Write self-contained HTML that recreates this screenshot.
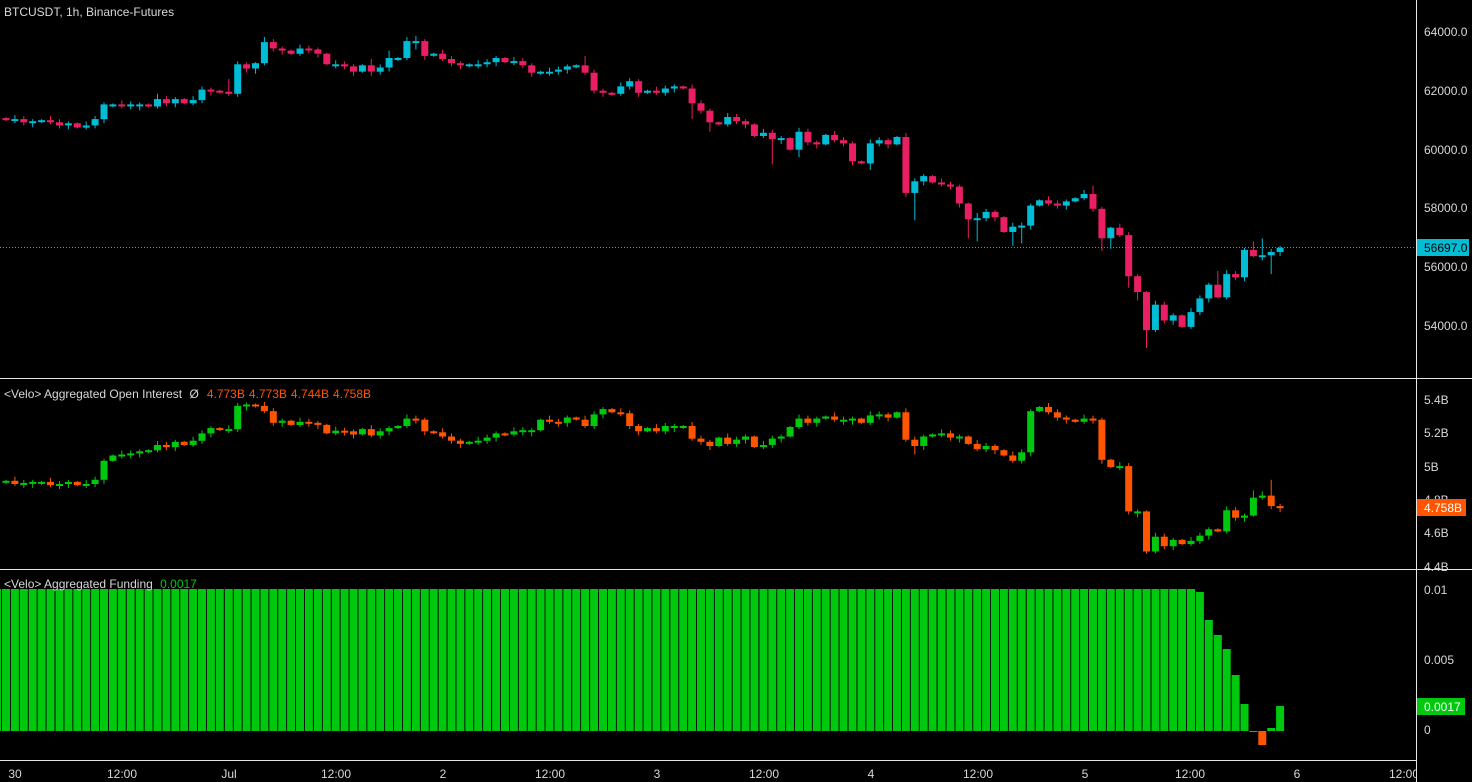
<!DOCTYPE html>
<html><head><meta charset="utf-8"><style>
html,body{margin:0;padding:0;background:#000;width:1472px;height:782px;overflow:hidden}
svg{display:block}
text{font-family:"Liberation Sans",sans-serif;font-size:12px;fill:#d8d8d8}
</style></head><body>
<svg id="s" width="1472" height="782" xmlns="http://www.w3.org/2000/svg">
<rect width="1472" height="782" fill="#000"/>
<g id="g"></g>
<line x1="0" y1="247.5" x2="1416" y2="247.5" stroke="#00bcd4" stroke-width="1" stroke-dasharray="1,2"/>
<line x1="0" y1="378.5" x2="1472" y2="378.5" stroke="#e6e6e6"/>
<line x1="0" y1="569.5" x2="1472" y2="569.5" stroke="#e6e6e6"/>
<line x1="0" y1="760.5" x2="1416" y2="760.5" stroke="#e6e6e6"/>
<line x1="1416.5" y1="0" x2="1416.5" y2="782" stroke="#e6e6e6"/>
<text x="4" y="16">BTCUSDT, 1h, Binance-Futures</text>
<text x="4" y="398">&lt;Velo&gt; Aggregated Open Interest  <tspan dx="4">Ø</tspan><tspan dx="8" style="fill:#ff5500">4.773B</tspan><tspan dx="4" style="fill:#ff5500">4.773B</tspan><tspan dx="4" style="fill:#ff5500">4.744B</tspan><tspan dx="4" style="fill:#ff5500">4.758B</tspan></text>
<text x="4" y="588">&lt;Velo&gt; Aggregated Funding <tspan dx="4" style="fill:#00c80f">0.0017</tspan></text>
<g>
<text x="1424" y="36">64000.0</text>
<text x="1424" y="95">62000.0</text>
<text x="1424" y="154">60000.0</text>
<text x="1424" y="212">58000.0</text>
<text x="1424" y="271">56000.0</text>
<text x="1424" y="330">54000.0</text>
<rect x="1417" y="239" width="52" height="17" fill="#00bcd4"/>
<text x="1424" y="252" style="fill:#000">56697.0</text>
<text x="1424" y="404">5.4B</text>
<text x="1424" y="437">5.2B</text>
<text x="1424" y="471">5B</text>
<text x="1424" y="504">4.8B</text>
<text x="1424" y="537">4.6B</text>
<text x="1424" y="571">4.4B</text>
<rect x="1417" y="499" width="49" height="17" fill="#ff5500"/>
<text x="1424" y="512" style="fill:#fff">4.758B</text>
<text x="1424" y="594">0.01</text>
<text x="1424" y="664">0.005</text>
<rect x="1417" y="698" width="48" height="17" fill="#00c80f"/>
<text x="1424" y="711" style="fill:#fff">0.0017</text>
<text x="1424" y="734">0</text>
</g>
<g id="t"></g>
</svg>
<script>
var g=document.getElementById('g'),out='';
function T(y){return 20+(y-20)*1.0545;}
function cx(i){return 6+8.91*i;}
var P=[115,114,117,116,115,117,120,118,122,120,114,100,100,101,100,100,102,95,99,95,99,96,86,87,88,90,62,66,61,41,47,49,52,47,48,52,62,62,64,69,63,69,65,56,56,40,40,54,52,57,61,63,62,62,60,56,60,59,63,70,69,69,67,64,63,70,87,89,90,83,78,89,87,89,85,83,85,99,106,117,119,112,116,119,130,127,133,132,143,126,136,138,129,134,137,154,156,137,134,138,131,184,173,168,174,176,178,194,209,208,202,207,221,216,215,196,191,194,196,192,189,185,199,227,217,224,263,278,314,290,305,300,311,297,284,271,283,261,264,238,244,243,240,236];
var PW={17:[90,null],25:[76,null],29:[36,null],28:[null,71],46:[35,48],43:[49,null],41:[57,73],65:[54,null],77:[null,114],79:[null,126],86:[null,157],89:[null,150],97:[null,162],101:[null,188],102:[null,210],108:[null,227],109:[203,230],113:[null,234],114:[null,232],122:[177,null],123:[null,239],124:[null,237],126:[null,274],127:[null,286],128:[null,331],136:[258,null],140:[230,null],141:[227,248],142:[null,261]};
var O=[457,460,459,458,458,461,460,458,461,460,456,438,433,432,431,429,428,423,425,420,423,419,412,407,408,408,386,384.6,386,391,402,400,404,401,402,404,412,409.5,410,413,408,414,410,407,405,398,399,410,411,415,419,422,420,419,416,412,413,410,409,409,399,401,402,397,399,405,394,389,392,393,405,410,407,410,405,405,405,417,420,424,416,422,418,415,425,423,417,415,406,398,402,398,396,399,399,398,402,395,394,397,392,418,424,415,413,412,416,415,422,427,424,428,433,438,430,391,387,392,397,399,401,398,399,437,444,443,486,486,524,510,519,513,517,514,509,503,505,485,492,490,473,471,481,483];
var OW={140:[466,null],141:[467,null],142:[456,null],126:[null,null],102:[null,432],128:[null,526]};
function candles(arr,W,upc,dnc,o0){
 for(var i=0;i<arr.length;i++){
  var o=i?arr[i-1]:o0,c=arr[i];
  var up=c<=o,col=up?upc:dnc;
  var top=T(Math.min(o,c)),bot=T(Math.max(o,c));
  if(bot-top<2)bot=top+2;
  var hi=top-(1+(i*7)%4),lo=bot+(1+(i*5)%4);
  if(W[i]){if(W[i][0]!=null)hi=T(W[i][0]);if(W[i][1]!=null)lo=T(W[i][1]);}
  var x=cx(i);
  out+='<rect x="'+(x-0.5).toFixed(1)+'" y="'+hi.toFixed(1)+'" width="1" height="'+(lo-hi).toFixed(1)+'" fill="'+col+'"/>';
  out+='<rect x="'+(x-3.5).toFixed(1)+'" y="'+top.toFixed(1)+'" width="7" height="'+(bot-top).toFixed(1)+'" fill="'+col+'"/>';
 }
}
candles(P,PW,'#00bcd4','#e91e63',113);
candles(O,OW,'#00c80f','#ff5500',457);
// funding
var F={134:592,135:620,136:635,137:649,138:675,139:704,142:728,143:706};
for(var i=-1;i<144;i++){
 var x=cx(i)-4;
 if(i==140){out+='<rect x="'+x.toFixed(1)+'" y="731" width="8" height="1" fill="#ff5500"/>';continue;}
 if(i==141){out+='<rect x="'+x.toFixed(1)+'" y="731" width="8" height="14" fill="#ff5500"/>';continue;}
 var t=F[i]||589;
 out+='<rect x="'+x.toFixed(1)+'" y="'+t+'" width="8" height="'+(731-t)+'" fill="#00c80f"/>';
}
g.innerHTML=out;
var L=[[15,'30'],[122,'12:00'],[229,'Jul'],[336,'12:00'],[443,'2'],[550,'12:00'],[657,'3'],[764,'12:00'],[871,'4'],[978,'12:00'],[1085,'5'],[1190,'12:00'],[1297,'6'],[1404,'12:00']];
var s='';L.forEach(function(l){s+='<text x="'+l[0]+'" y="778" text-anchor="middle">'+l[1]+'</text>';});
s+='<rect x="1417" y="761" width="55" height="21" fill="#000"/>';
document.getElementById('t').innerHTML=s;
</script>
</body></html>
